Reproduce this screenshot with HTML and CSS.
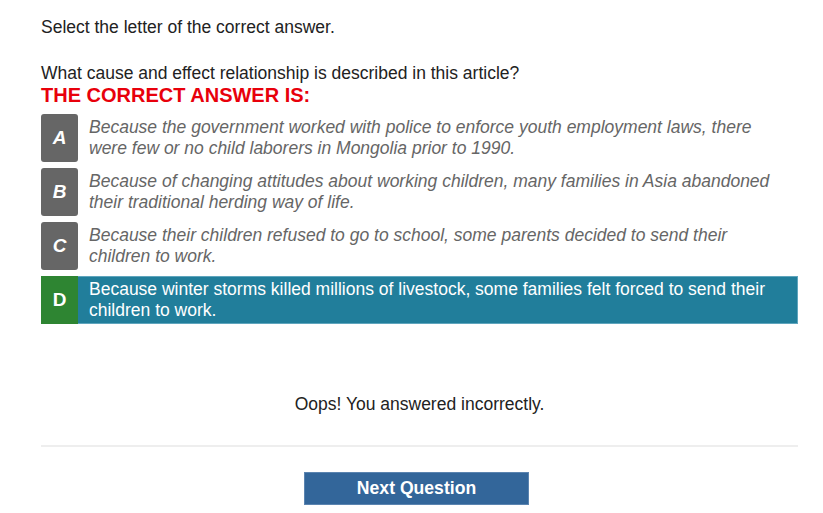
FILE: index.html
```html
<!DOCTYPE html>
<html>
<head>
<meta charset="utf-8">
<link rel="stylesheet" href="styles.css">
</head>
<body>
<div class="page">
  <p class="instr">Select the letter of the correct answer.</p>
  <p class="question">What cause and effect relationship is described in this article?</p>
  <div class="correct-label">THE CORRECT ANSWER IS:</div>
  <div class="choices">
    <div class="choice">
      <div class="letter">A</div>
      <div class="text">Because the government worked with police to enforce youth employment laws, there were few or no child laborers in Mongolia prior to 1990.</div>
    </div>
    <div class="choice">
      <div class="letter">B</div>
      <div class="text">Because of changing attitudes about working children, many families in Asia abandoned their traditional herding way of life.</div>
    </div>
    <div class="choice">
      <div class="letter">C</div>
      <div class="text">Because their children refused to go to school, some parents decided to send their children to work.</div>
    </div>
    <div class="choice correct">
      <div class="letter">D</div>
      <div class="text">Because winter storms killed millions of livestock, some families felt forced to send their children to work.</div>
    </div>
  </div>
  <div class="feedback">Oops! You answered incorrectly.</div>
  <div class="footer">
    <button class="next">Next Question</button>
  </div>
</div>
</body>
</html>
```
FILE: styles.css
```css
html, body {
  margin: 0;
  padding: 0;
  background: #fff;
}
body {
  font-family: "Liberation Sans", Arial, sans-serif;
  font-size: 17.5px;
  color: #222;
}
.page {
  width: 757px;
  margin-left: 41px;
  padding-top: 17px;
}
.instr {
  margin: 0;
  line-height: 20px;
}
.question {
  margin: 26px 0 0 0;
  line-height: 20px;
}
.correct-label {
  color: #e8000b;
  font-weight: bold;
  font-size: 20px;
  line-height: 24px;
  margin-bottom: 7px;
}
.choices {
  display: flex;
  flex-direction: column;
  gap: 6px;
}
.choice {
  display: flex;
  align-items: center;
  min-height: 48px;
}
.letter {
  flex: 0 0 37px;
  height: 48px;
  background: #666;
  border-radius: 3px;
  color: #fff;
  font-weight: bold;
  font-style: italic;
  font-size: 19px;
  display: flex;
  align-items: center;
  justify-content: center;
}
.text {
  padding-left: 11px;
  font-style: italic;
  color: #666;
  line-height: 21px;
  padding-right: 22px;
}
.choice.correct {
  background: #217e9b;
  box-shadow: inset 0 0 0 1px #5fa5bd;
}
.choice.correct .letter {
  background: #2e8532;
  border-radius: 0;
  font-style: normal;
}
.choice.correct .text {
  color: #fff;
  font-style: normal;
}
.feedback {
  text-align: center;
  margin-top: 70px;
  line-height: 20px;
}
.footer {
  margin-top: 31px;
  border-top: 2px solid #eeeeee;
  padding-top: 25px;
  display: flex;
  justify-content: center;
}
.next {
  width: 225px;
  height: 33px;
  margin-right: 6px;
  background: #33669a;
  border: 1px solid #5b84b0;
  color: #fff;
  font-family: "Liberation Sans", Arial, sans-serif;
  font-weight: bold;
  font-size: 17.6px;
  padding: 0;
  cursor: pointer;
}
```
